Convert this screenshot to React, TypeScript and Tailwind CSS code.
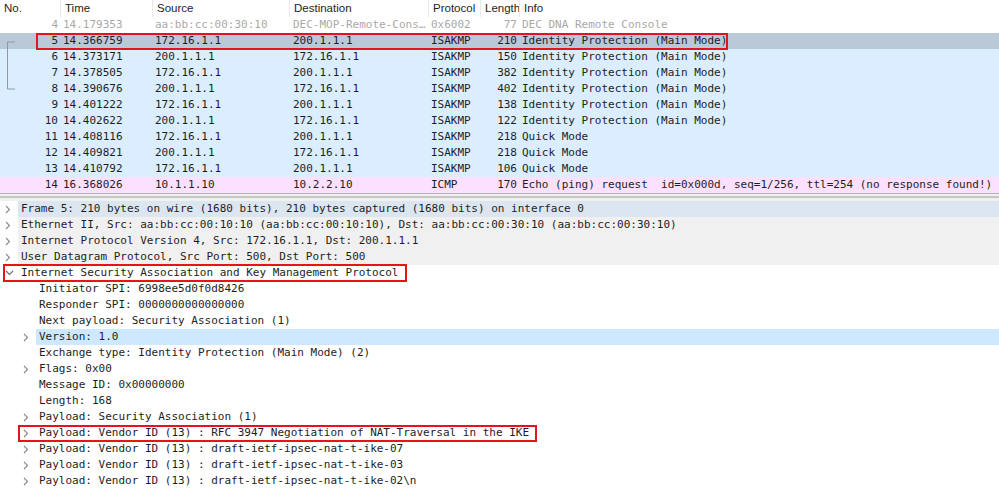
import React from 'react';

type Packet = {
  no: number;
  time: string;
  src: string;
  dst: string;
  proto: string;
  len: number;
  info: string;
  tone: 'dim' | 'sel' | 'udp' | 'icmp';
};

const packets: Packet[] = [
  { no: 4, time: '14.179353', src: 'aa:bb:cc:00:30:10', dst: 'DEC-MOP-Remote-Cons…', proto: '0x6002', len: 77, info: 'DEC DNA Remote Console', tone: 'dim' },
  { no: 5, time: '14.366759', src: '172.16.1.1', dst: '200.1.1.1', proto: 'ISAKMP', len: 210, info: 'Identity Protection (Main Mode)', tone: 'sel' },
  { no: 6, time: '14.373171', src: '200.1.1.1', dst: '172.16.1.1', proto: 'ISAKMP', len: 150, info: 'Identity Protection (Main Mode)', tone: 'udp' },
  { no: 7, time: '14.378505', src: '172.16.1.1', dst: '200.1.1.1', proto: 'ISAKMP', len: 382, info: 'Identity Protection (Main Mode)', tone: 'udp' },
  { no: 8, time: '14.390676', src: '200.1.1.1', dst: '172.16.1.1', proto: 'ISAKMP', len: 402, info: 'Identity Protection (Main Mode)', tone: 'udp' },
  { no: 9, time: '14.401222', src: '172.16.1.1', dst: '200.1.1.1', proto: 'ISAKMP', len: 138, info: 'Identity Protection (Main Mode)', tone: 'udp' },
  { no: 10, time: '14.402622', src: '200.1.1.1', dst: '172.16.1.1', proto: 'ISAKMP', len: 122, info: 'Identity Protection (Main Mode)', tone: 'udp' },
  { no: 11, time: '14.408116', src: '172.16.1.1', dst: '200.1.1.1', proto: 'ISAKMP', len: 218, info: 'Quick Mode', tone: 'udp' },
  { no: 12, time: '14.409821', src: '200.1.1.1', dst: '172.16.1.1', proto: 'ISAKMP', len: 218, info: 'Quick Mode', tone: 'udp' },
  { no: 13, time: '14.410792', src: '172.16.1.1', dst: '200.1.1.1', proto: 'ISAKMP', len: 106, info: 'Quick Mode', tone: 'udp' },
  { no: 14, time: '16.368026', src: '10.1.1.10', dst: '10.2.2.10', proto: 'ICMP', len: 170, info: 'Echo (ping) request  id=0x000d, seq=1/256, ttl=254 (no response found!)', tone: 'icmp' },
];

type Node = {
  text: string;
  level: 0 | 1;
  arrow?: 'right' | 'down';
  bg?: string;
};

const details: Node[] = [
  { text: 'Frame 5: 210 bytes on wire (1680 bits), 210 bytes captured (1680 bits) on interface 0', level: 0, arrow: 'right', bg: 'bg-[#dce6f0]' },
  { text: 'Ethernet II, Src: aa:bb:cc:00:10:10 (aa:bb:cc:00:10:10), Dst: aa:bb:cc:00:30:10 (aa:bb:cc:00:30:10)', level: 0, arrow: 'right', bg: 'bg-[#f0f0f0]' },
  { text: 'Internet Protocol Version 4, Src: 172.16.1.1, Dst: 200.1.1.1', level: 0, arrow: 'right', bg: 'bg-[#f0f0f0]' },
  { text: 'User Datagram Protocol, Src Port: 500, Dst Port: 500', level: 0, arrow: 'right', bg: 'bg-[#f0f0f0]' },
  { text: 'Internet Security Association and Key Management Protocol', level: 0, arrow: 'down' },
  { text: 'Initiator SPI: 6998ee5d0f0d8426', level: 1 },
  { text: 'Responder SPI: 0000000000000000', level: 1 },
  { text: 'Next payload: Security Association (1)', level: 1 },
  { text: 'Version: 1.0', level: 1, arrow: 'right', bg: 'bg-[#cde8ff]' },
  { text: 'Exchange type: Identity Protection (Main Mode) (2)', level: 1 },
  { text: 'Flags: 0x00', level: 1, arrow: 'right' },
  { text: 'Message ID: 0x00000000', level: 1 },
  { text: 'Length: 168', level: 1 },
  { text: 'Payload: Security Association (1)', level: 1, arrow: 'right' },
  { text: 'Payload: Vendor ID (13) : RFC 3947 Negotiation of NAT-Traversal in the IKE', level: 1, arrow: 'right' },
  { text: 'Payload: Vendor ID (13) : draft-ietf-ipsec-nat-t-ike-07', level: 1, arrow: 'right' },
  { text: 'Payload: Vendor ID (13) : draft-ietf-ipsec-nat-t-ike-03', level: 1, arrow: 'right' },
  { text: 'Payload: Vendor ID (13) : draft-ietf-ipsec-nat-t-ike-02\\n', level: 1, arrow: 'right' },
];

const cols = 'grid grid-cols-[60px_92px_137px_139px_52px_39px_1fr]';
const mono = "font-['DejaVu_Sans_Mono',monospace] text-[11px]";

const toneBg: Record<Packet['tone'], string> = {
  dim: 'bg-white text-[#a9a9a9]',
  sel: 'bg-[#b9c9d8] text-[#1e1e1e]',
  udp: 'bg-[#daeeff] text-[#1e1e1e]',
  icmp: 'bg-[#fce0ff] text-[#1e1e1e]',
};

function Chevron({ dir }: { dir: 'right' | 'down' }) {
  return dir === 'right' ? (
    <svg width="6" height="9" viewBox="0 0 6 9" className="shrink-0">
      <polyline points="1,1 4.5,4.5 1,8" fill="none" stroke="#8a8a8a" strokeWidth="1.1" />
    </svg>
  ) : (
    <svg width="9" height="6" viewBox="0 0 9 6" className="shrink-0">
      <polyline points="1,1 4.5,4.5 8,1" fill="none" stroke="#6a6a6a" strokeWidth="1.1" />
    </svg>
  );
}

function Header() {
  const names = ['No.', 'Time', 'Source', 'Destination', 'Protocol', 'Length', 'Info'];
  return (
    <div className={`${cols} h-[17px] bg-white font-['Liberation_Sans',Arial,sans-serif] text-[11.5px] text-[#1e1e1e]`}>
      {names.map((n, i) => (
        <div key={n} className={`flex items-center pl-[4px] ${i > 0 ? 'border-l border-[#e8e8e8]' : ''}`}>
          {n}
        </div>
      ))}
    </div>
  );
}

function PacketRow({ p }: { p: Packet }) {
  return (
    <div className={`${cols} h-[16px] items-center whitespace-pre ${mono} ${toneBg[p.tone]}`}>
      <div className="pr-[2px] text-right">{p.no}</div>
      <div className="pl-[3px]">{p.time}</div>
      <div className="pl-[3px]">{p.src}</div>
      <div className="overflow-hidden pl-[4px]">{p.dst}</div>
      <div className="pl-[3px]">{p.proto}</div>
      <div className="pr-[2px] text-right">{p.len}</div>
      <div className="overflow-hidden pl-[3px]">{p.info}</div>
    </div>
  );
}

function DetailRow({ n }: { n: Node }) {
  const indent = n.level === 0 ? 'pl-[5px]' : 'pl-[23px]';
  return (
    <div className={`flex h-[16px] items-stretch ${indent}`}>
      <div className="flex w-[13px] shrink-0 items-center justify-start">
        {n.arrow && <Chevron dir={n.arrow} />}
      </div>
      <div className={`flex flex-1 items-center whitespace-pre pl-[3px] text-[#1e1e1e] ${mono} ${n.bg ?? ''}`}>
        {n.text}
      </div>
    </div>
  );
}

export default function App() {
  return (
    <div className="relative h-[491px] w-[999px] overflow-hidden bg-white">
      <div className="relative">
        <Header />
        {packets.map((p) => (
          <PacketRow key={p.no} p={p} />
        ))}
        {/* related-packet bracket */}
        <svg className="absolute left-[6px] top-[41px]" width="12" height="50">
          <polyline points="9,1 1.5,1 1.5,48 9,48" fill="none" stroke="#8d9aa6" strokeWidth="1" />
        </svg>
        {/* annotation on packet 5 */}
        <div className="absolute left-[36px] top-[33px] h-[17px] w-[692px] border-2 border-[#e3141c]" />
      </div>

      <div className="h-[8px] border-t border-[#b4b4b4] bg-[#f0f0f0]">
        <div className="mt-[2px] h-[2px] bg-[#c6c6c6]" />
      </div>

      <div className="relative">
        {details.map((n, i) => (
          <DetailRow key={i} n={n} />
        ))}
        <div className="absolute left-[3px] top-[63px] h-[18px] w-[404px] border-2 border-[#e3141c]" />
        <div className="absolute left-[18px] top-[224px] h-[17px] w-[519px] border-2 border-[#e3141c]" />
      </div>
    </div>
  );
}
